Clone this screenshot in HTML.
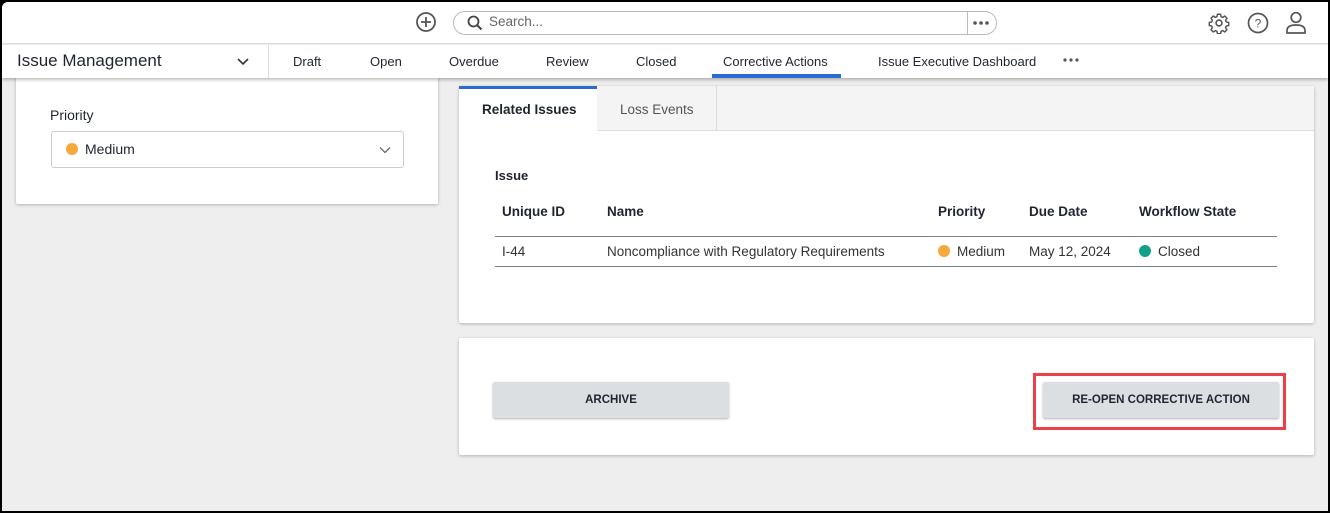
<!DOCTYPE html>
<html><head><style>
*{box-sizing:border-box;margin:0;padding:0}
body{width:1330px;height:513px;overflow:hidden;background:#000;font-family:"Liberation Sans",sans-serif;color:#1f2430;position:relative}
.frame{position:absolute;left:2px;top:2px;width:1326px;height:509px;background:#eeeeee;border-radius:6px 0 0 0;overflow:hidden}
.hdr{position:absolute;left:0;top:0;width:100%;height:42px;background:#fff;border-bottom:1px solid #ddd}
.nav{position:absolute;left:0;top:43px;width:100%;height:33px;background:#fff;box-shadow:0 2px 3px rgba(0,0,0,.25);z-index:5}
.nav span{position:absolute;top:9px;font-size:13px;color:#1f2430}
.abs{position:absolute}
.card{position:absolute;background:#fff;box-shadow:0 1px 3px rgba(0,0,0,.25);border-radius:2px}
.t{position:absolute;font-size:14px;white-space:nowrap}
.btn{position:absolute;background:#dcdfe2;border-radius:2px;box-shadow:0 1px 2px rgba(0,0,0,.3);font-size:11.5px;font-weight:bold;text-align:center;line-height:36px;color:#1f2430}
.dot{display:inline-block;width:12px;height:12px;border-radius:50%;vertical-align:-1px;margin-right:7px}
</style></head><body>
<div class="frame">
<div class="hdr">
 <svg class="abs" style="left:413px;top:9px" width="22" height="22" viewBox="0 0 22 22"><circle cx="11" cy="11" r="9" fill="none" stroke="#555" stroke-width="1.8"/><path d="M11 6v10M6 11h10" stroke="#555" stroke-width="1.8"/></svg>
 <div class="abs" style="left:451px;top:9px;width:544px;height:24px;border:1px solid #bbb;border-radius:12px"></div>
 <div class="abs" style="left:965px;top:10px;width:1px;height:22px;background:#bbb"></div>
 <svg class="abs" style="left:465px;top:13px" width="16" height="16" viewBox="0 0 16 16"><circle cx="6.5" cy="6.5" r="5" fill="none" stroke="#444" stroke-width="1.8"/><path d="M10 10l4.5 4.5" stroke="#444" stroke-width="2"/></svg>
 <span class="t" style="left:487px;top:12px;color:#666;font-size:13.5px">Search...</span>
 <svg class="abs" style="left:970px;top:18px" width="18" height="6" viewBox="0 0 18 6"><circle cx="3" cy="3" r="1.8" fill="#555"/><circle cx="9" cy="3" r="1.8" fill="#555"/><circle cx="15" cy="3" r="1.8" fill="#555"/></svg>
 <svg class="abs" style="left:1206px;top:10px" width="22" height="22" viewBox="0 0 24 24"><circle cx="12" cy="12" r="3.2" fill="none" stroke="#555" stroke-width="1.7"/><path d="M10.3 2.5h3.4l.5 2.6 1.9.8 2.2-1.5 2.4 2.4-1.5 2.2.8 1.9 2.6.5v3.4l-2.6.5-.8 1.9 1.5 2.2-2.4 2.4-2.2-1.5-1.9.8-.5 2.6h-3.4l-.5-2.6-1.9-.8-2.2 1.5-2.4-2.4 1.5-2.2-.8-1.9-2.6-.5v-3.4l2.6-.5.8-1.9-1.5-2.2 2.4-2.4 2.2 1.5 1.9-.8z" fill="none" stroke="#555" stroke-width="1.6" stroke-linejoin="round"/></svg>
 <svg class="abs" style="left:1245px;top:10px" width="22" height="22" viewBox="0 0 22 22"><circle cx="11" cy="11" r="9.5" fill="none" stroke="#555" stroke-width="1.7"/><text x="11" y="15.5" font-size="12" font-family="Liberation Sans" text-anchor="middle" fill="#555">?</text></svg>
 <svg class="abs" style="left:1283px;top:9px" width="22" height="24" viewBox="0 0 22 24"><circle cx="11" cy="6.5" r="4.8" fill="none" stroke="#555" stroke-width="1.7"/><path d="M2 22v-2.5c0-3.5 3-5.5 9-5.5s9 2 9 5.5V22z" fill="none" stroke="#555" stroke-width="1.7"/></svg>
</div>
<div class="nav">
 <span style="left:15px;top:6px;font-size:17px">Issue Management</span>
 <svg class="abs" style="left:234px;top:12px" width="14" height="10" viewBox="0 0 14 10"><path d="M2 2l5 5 5-5" fill="none" stroke="#333" stroke-width="1.6"/></svg>
 <div class="abs" style="left:266px;top:0;width:1px;height:33px;background:#ddd"></div>
 <span style="left:291px">Draft</span><span style="left:368px">Open</span><span style="left:447px">Overdue</span><span style="left:544px">Review</span><span style="left:634px">Closed</span>
 <span style="left:721px">Corrective Actions</span>
 <div class="abs" style="left:710px;top:29px;width:129px;height:4px;background:#2a6bd0"></div>
 <span style="left:876px">Issue Executive Dashboard</span>
 <svg class="abs" style="left:1060px;top:12px" width="18" height="6" viewBox="0 0 18 6"><circle cx="3" cy="3" r="1.6" fill="#555"/><circle cx="9" cy="3" r="1.6" fill="#555"/><circle cx="15" cy="3" r="1.6" fill="#555"/></svg>
</div>
<div class="card" style="left:14px;top:60px;width:422px;height:142px">
 <div class="abs" style="left:20px;top:0;width:368px;height:16px;border:1px solid #ccc;border-top:none;border-radius:0 0 3px 3px"></div>
 <span class="t" style="left:34px;top:45px">Priority</span>
 <div class="abs" style="left:35px;top:69px;width:353px;height:37px;border:1px solid #ccc;border-radius:3px"></div>
 <span class="t" style="left:50px;top:79px"><span class="dot" style="background:#f5a93b"></span>Medium</span>
 <svg class="abs" style="left:363px;top:84px" width="12" height="8" viewBox="0 0 12 8"><path d="M1 1.5l5 5 5-5" fill="none" stroke="#666" stroke-width="1.3"/></svg>
</div>
<div class="card" style="left:457px;top:84px;width:855px;height:237px">
 <div class="abs" style="left:0;top:0;width:855px;height:45px;background:#f4f4f5;border-bottom:1px solid #ddd"></div>
 <div class="abs" style="left:0;top:0;width:138px;height:46px;background:#fff;border-top:3px solid #2a6bd0"></div>
 <div class="abs" style="left:257px;top:0;width:1px;height:45px;background:#ddd"></div>
 <span class="t" style="left:23px;top:16px;font-weight:bold;font-size:13.5px">Related Issues</span>
 <span class="t" style="left:161px;top:16px;color:#555;font-size:13.5px">Loss Events</span>
 <span class="t" style="left:36px;top:82px;font-weight:bold;font-size:13px">Issue</span>
 <span class="t" style="left:43px;top:118px;font-weight:bold;font-size:13.5px">Unique ID</span>
 <span class="t" style="left:148px;top:118px;font-weight:bold;font-size:13.5px">Name</span>
 <span class="t" style="left:479px;top:118px;font-weight:bold;font-size:13.5px">Priority</span>
 <span class="t" style="left:570px;top:118px;font-weight:bold;font-size:13.5px">Due Date</span>
 <span class="t" style="left:680px;top:118px;font-weight:bold;font-size:13.5px">Workflow State</span>
 <div class="abs" style="left:36px;top:150px;width:782px;height:1px;background:#7a8089"></div>
 <span class="t" style="left:43px;top:158px;color:#333;font-size:13.5px">I-44</span>
 <span class="t" style="left:148px;top:158px;color:#333;font-size:13.5px">Noncompliance with Regulatory Requirements</span>
 <span class="t" style="left:479px;top:158px;color:#333;font-size:13.5px"><span class="dot" style="background:#f5a93b"></span>Medium</span>
 <span class="t" style="left:570px;top:158px;color:#333;font-size:13.5px">May 12, 2024</span>
 <span class="t" style="left:680px;top:158px;color:#333;font-size:13.5px"><span class="dot" style="background:#13a08a"></span>Closed</span>
 <div class="abs" style="left:36px;top:180px;width:782px;height:1px;background:#7a8089"></div>
</div>
<div class="card" style="left:457px;top:336px;width:855px;height:117px">
 <div class="btn" style="left:34px;top:44px;width:236px;height:36px">ARCHIVE</div>
 <div class="btn" style="left:584px;top:44px;width:236px;height:36px">RE-OPEN CORRECTIVE ACTION</div>
 <div class="abs" style="left:574px;top:35px;width:253px;height:57px;border:3px solid #ec4049"></div>
</div>
</div>
</body></html>
